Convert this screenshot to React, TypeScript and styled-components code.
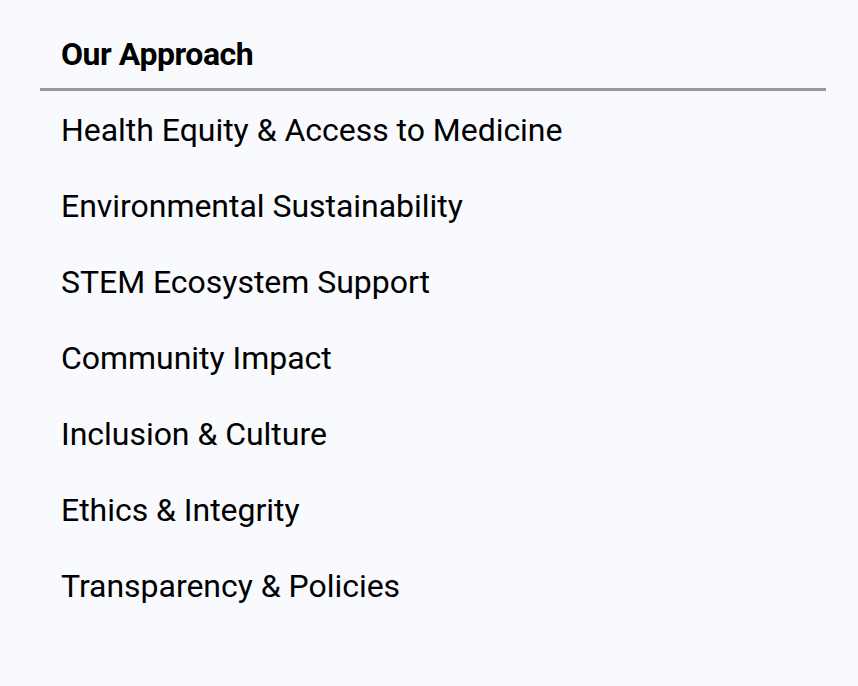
import React from "react";
import styled, { createGlobalStyle } from "styled-components";

const Global = createGlobalStyle`
  html, body { margin: 0; padding: 0; background: #f9fafd; }
  body { font-family: Roboto, "Liberation Sans", Arial, sans-serif; color: #000; }
`;

const Nav = styled.nav`
  display: flex;
  flex-direction: column;
  padding: 38px 32px 0 40px;
`;

const Title = styled.h2`
  margin: 0;
  padding: 0 21px 17px;
  font-size: 32px;
  line-height: 33px;
  font-weight: 700;
  letter-spacing: -0.45px;
  border-bottom: 3px solid #9a9a9a;
`;

const List = styled.ul`
  list-style: none;
  margin: 0;
  padding: 1px 0 0;
  display: flex;
  flex-direction: column;
`;

const Item = styled.li`
  padding: 0 21px;
  font-size: 32px;
  line-height: 76px;
  font-weight: 400;
  letter-spacing: -0.03px;
`;

const items = [
  "Health Equity & Access to Medicine",
  "Environmental Sustainability",
  "STEM Ecosystem Support",
  "Community Impact",
  "Inclusion & Culture",
  "Ethics & Integrity",
  "Transparency & Policies",
];

export default function App() {
  return (
    <>
      <Global />
      <Nav>
        <Title>Our Approach</Title>
        <List>
          {items.map((t) => (
            <Item key={t}>{t}</Item>
          ))}
        </List>
      </Nav>
    </>
  );
}
